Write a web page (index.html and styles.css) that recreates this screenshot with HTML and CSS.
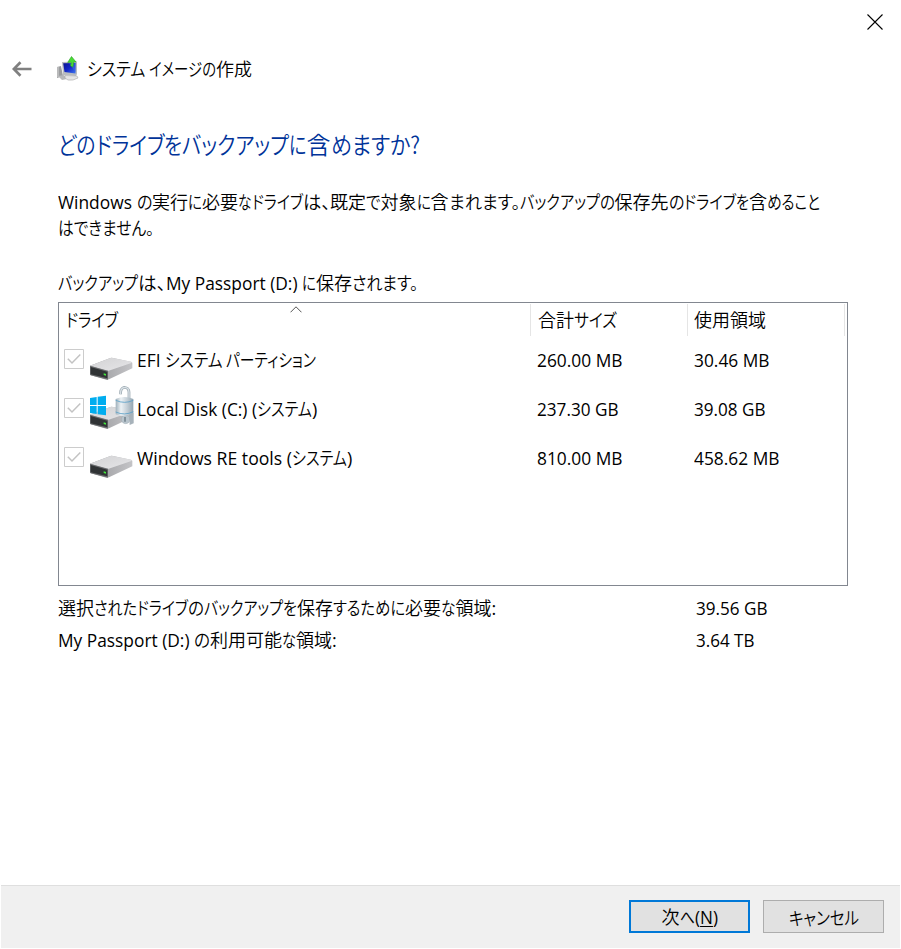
FILE: index.html
```
<!DOCTYPE html>
<html lang="ja">
<head>
<meta charset="utf-8">
<title>システム イメージの作成</title>
<link rel="stylesheet" href="styles.css">
</head>
<body>
<svg class="defs" aria-hidden="true">
  <defs>
    <linearGradient id="top" x1="0" y1="0" x2="1" y2="1"><stop offset="0" stop-color="#d2d2d4"/><stop offset="1" stop-color="#e6e6e8"/></linearGradient>
    <linearGradient id="side" x1="0" y1="0" x2="1" y2="0"><stop offset="0" stop-color="#96979a"/><stop offset="1" stop-color="#c4c4c7"/></linearGradient>
    <linearGradient id="steel" x1="0" y1="0" x2="1" y2="0"><stop offset="0" stop-color="#9fb0bb"/><stop offset=".3" stop-color="#edf2f5"/><stop offset=".65" stop-color="#c3ced6"/><stop offset="1" stop-color="#93a5b1"/></linearGradient>
    <linearGradient id="screen" x1="0" y1="0" x2="1" y2="1"><stop offset="0" stop-color="#0a1290"/><stop offset=".5" stop-color="#1428c8"/><stop offset="1" stop-color="#3f78f0"/></linearGradient>
    <symbol id="drive" viewBox="96 -12 144 147">
      <path d="M102 77 163 54q4-1 8 0l54 11q4 1 4 5v15l-70 33q-4 2-8 1l-46-13q-3-1-3-5z" fill="url(#side)"/>
      <path d="M102 77 163 54q4-1 8 0l54 11q4 2 1 4l-68 23q-3 1-6 0z" fill="url(#top)"/>
      <path d="M102 77l54 15v27l-52-13q-2-1-2-4z" fill="#6c6e70"/>
      <path d="M104 81l50 14v20l-50-12z" fill="#303335"/>
      <path d="M143 100l7 2v5l-7-2z" fill="#42e83c"/>
    </symbol>
    <symbol id="check" viewBox="0 0 20 20">
      <path d="M.5.5h19v19H.5z" fill="#fff" stroke="#ccc"/>
      <path d="M3.8 9.8 8 14 16.3 5.5" fill="none" stroke="#c3c3c3" stroke-width="1.5"/>
    </symbol>
  </defs>
</svg>
<div class="window">
  <div class="titlebar">
    <svg class="close" viewBox="0 0 16 16"><path d="M.5.5l15 15M15.5.5l-15 15" stroke="#000" stroke-width="1.1"/></svg>
  </div>
  <header class="head">
    <svg class="back" viewBox="0 0 20 16"><path d="M19.5 8H2M8.5 1.2 1.8 8l6.700 6.800" fill="none" stroke="#808080" stroke-width="2.700"/></svg>
    <svg class="app" viewBox="0 0 24 26">
      <path d="M1 11l4-1 2 10-6 2z" fill="#9b9c9e"/><path d="M2 11v10" stroke="#d8d8d8"/>
      <path d="M2 20l6-1 3 4-5 1z" fill="#b7b8ba"/>
      <path d="M6 6 21 5.500V18l-1 2-13-1z" fill="#b9bcc0"/>
      <path d="M7.200 7.200 19.500 7v10.500l-11-1.500z" fill="url(#screen)"/>
      <path d="M13 7.200l6.500-.2v9z" fill="#3f6ae6" opacity=".6"/>
      <path d="M9 19.500l12 .5 1 2q-5 3-10 2l-3-2z" fill="#e5e5e5" stroke="#a9a9a9" stroke-width=".6"/>
      <path d="M15.500.5 20 6l-2.500.1q.4 3-1 5.200l-2-1.700q.9-1.600.6-3.400l-3.400.2z" fill="#49dc35" stroke="#259f20" stroke-width=".6"/>
    </svg>
    <div class="line"><span class="fit" data-w="62">システム </span><span class="fit" data-w="67">イメージの</span>作成</div>
  </header>
  <main>
    <h1><span class="fit" data-w="37.500">どの</span><span class="fit" data-w="68.500">ドライブ</span><span class="fit" data-w="18">を</span><span class="fit" data-w="107">バックアップ</span><span class="fit" data-w="17.500">に</span>含<span class="fit" data-w="89">めますか?</span></h1>
    <div class="line intro"><span class="fit l" data-w="78.500">Windows </span><span class="fit" data-w="15.500">の</span>実行<span class="fit" data-w="14">に</span>必要<span class="fit" data-w="13.500">な</span><span class="fit" data-w="51">ドライブ</span><span class="fit" data-w="27.500">は、</span>既定<span class="fit" data-w="14.500">で</span>対象<span class="fit" data-w="14">に</span>含<span class="fit" data-w="71">まれます。</span><span class="fit" data-w="80">バックアップ</span><span class="fit" data-w="15">の</span>保存先<span class="fit" data-w="15.500">の</span><span class="fit" data-w="52">ドライブ</span><span class="fit" data-w="13">を</span>含<span class="fit" data-w="53">めること</span></div>
    <div class="line intro"><span class="fit" data-w="96">はできません。</span></div>
    <div class="line dest"><span class="fit" data-w="80">バックアップ</span><span class="fit" data-w="28">は、</span><span class="fit l" data-w="136">My Passport (D:) </span><span class="fit" data-w="14">に</span>保存<span class="fit" data-w="66">されます。</span></div>
    <section class="list">
      <svg class="sort" viewBox="0 0 12 7"><path d="M.5 6.300 6 .8l5.500 5.500" fill="none" stroke="#555"/></svg>
      <div class="row cols">
        <div class="name"><span class="fit" data-w="52">ドライブ</span></div>
        <div class="total">合計<span class="fit" data-w="43">サイズ</span></div>
        <div class="used">使用領域</div>
      </div>
      <div class="row item">
        <div class="name"><svg class="check"><use href="#check"/></svg><svg class="disk"><use href="#drive"/></svg><div><span class="fit l" data-w="28">EFI </span><span class="fit" data-w="61">システム </span><span class="fit" data-w="90">パーティション</span></div></div>
        <div class="total"><span class="fit l" data-w="85.500">260.00 MB</span></div>
        <div class="used"><span class="fit l" data-w="75.500">30.46 MB</span></div>
      </div>
      <div class="row item">
        <div class="name"><svg class="check"><use href="#check"/></svg><svg class="disk" viewBox="96 135 144 147">
          <use href="#drive" x="96" y="135" width="144" height="147"/>
          <path d="M102 174l20-3v24h-20zM125 170.500l25-3.500v28h-25zM102 198h20v24l-20-3zM125 198h25v28l-25-3.500z" fill="#00adef"/>
          <path d="M194 163v-6c0-20 25-19 25 0v20" fill="none" stroke="#8c9ba5" stroke-width="8"/>
          <path d="M194 162v-5c0-20 25-19 25 0v20" fill="none" stroke="#d8e0e5" stroke-width="4.500"/>
          <circle cx="209" cy="238" r="13" fill="#b9c5cd" stroke="#93a1aa"/>
          <path d="M207 231v14" stroke="#677883" stroke-width="4"/>
          <path d="M219 222l14-4v32l-12 5z" fill="#a7b2ba"/>
          <path d="M179 177q27-12 53 0v42q-26 15-53 4z" fill="url(#steel)"/>
          <path d="M179 181q27 12 53 0M179 216q27 12 53-1" fill="none" stroke="#5aa0c8" stroke-width="2.500"/>
        </svg><div><span class="fit l" data-w="120">Local Disk (C:) (</span><span class="fit" data-w="55">システム</span><span class="l">)</span></div></div>
        <div class="total"><span class="fit l" data-w="81.500">237.30 GB</span></div>
        <div class="used"><span class="fit l" data-w="71.500">39.08 GB</span></div>
      </div>
      <div class="row item">
        <div class="name"><svg class="check"><use href="#check"/></svg><svg class="disk"><use href="#drive"/></svg><div><span class="fit l" data-w="155">Windows RE tools (</span><span class="fit" data-w="55">システム</span><span class="l">)</span></div></div>
        <div class="total"><span class="fit l" data-w="85.500">810.00 MB</span></div>
        <div class="used"><span class="fit l" data-w="85.500">458.62 MB</span></div>
      </div>
    </section>
    <div class="line sum"><div class="label">選択<span class="fit" data-w="43">された</span><span class="fit" data-w="51">ドライブ</span><span class="fit" data-w="16">の</span><span class="fit" data-w="79">バックアップ</span><span class="fit" data-w="14">を</span>保存<span class="fit" data-w="72">するために</span>必要<span class="fit" data-w="14.500">な</span>領域<span class="l">:</span></div><span class="fit l" data-w="71.500">39.56 GB</span></div>
    <div class="line sum"><div class="label"><span class="fit l" data-w="136">My Passport (D:) </span><span class="fit" data-w="16">の</span>利用可能<span class="fit" data-w="14">な</span>領域<span class="l">:</span></div><span class="fit l" data-w="58.500">3.64 TB</span></div>
  </main>
  <footer>
    <button class="btn primary">次<span class="fit" data-w="15">へ</span><span class="fit l" data-w="23">(<u>N</u>)</span></button>
    <button class="btn"><span class="fit" data-w="70">キャンセル</span></button>
  </footer>
</div>
<script src="fit.js"></script>
</body>
</html>
```
FILE: styles.css
```
* { box-sizing: border-box; }
body {
  margin: 0;
  background: #fff;
  color: #000;
  font: 350 18px/26px "Noto Sans CJK JP", sans-serif;
}
.defs { position: absolute; width: 0; height: 0; }
.window { height: 949px; display: flex; flex-direction: column; padding: 0 1px 1px; }
.titlebar { height: 50px; display: flex; justify-content: flex-end; padding: 14px 17px 0 0; }
.close { width: 16px; height: 16px; }
.head { height: 38px; display: flex; align-items: center; padding-left: 11px; }
.head .line { padding-bottom: 2px; }
.back { width: 20px; height: 16px; margin-right: 24px; }
.app { width: 24px; height: 26px; margin-right: 7px; }
.line { white-space: nowrap; }
.fit { display: inline-block; white-space: pre; transform-origin: 0 50%; font-feature-settings: "palt"; }
.l { font-family: "Open Sans", sans-serif; font-weight: 400; }
main { flex: 1; padding: 38px 52px 0 57px; }
h1 { margin: 0 0 26px; height: 36px; font-size: 24px; line-height: 36px; font-weight: 350; color: #003399; white-space: nowrap; }
.intro { height: 26px; }
.dest { margin-top: 29px; height: 30px; }
.list { position: relative; width: 790px; height: 284px; margin-top: 3px; border: 1px solid #828790; }
.sort { position: absolute; left: 231px; top: 3px; width: 12px; height: 7px; }
.row { display: grid; grid-template-columns: 472px 157px 157px; white-space: nowrap; }
.cols { height: 33px; line-height: 31px; }
.cols > div { border-right: 1px solid #e5e5e5; margin-top: 1px; }
.cols .name { padding-left: 7px; }
.cols .total { padding-left: 7px; }
.cols .used { padding-left: 6px; }
.item { height: 49px; line-height: 47px; }
.item .name { display: flex; padding-left: 5px; }
.item .total { padding-left: 6px; }
.item .used { padding-left: 6px; }
.check { width: 20px; height: 20px; margin: 13px 4px 0 0; }
.disk { width: 48px; height: 49px; margin-right: 1px; }
.sum { display: flex; align-items: baseline; height: 32px; line-height: 32px; }
.sum .label { width: 638px; }
.list + .sum { margin-top: 5px; }
footer { height: 63px; background: #f0f0f0; border-top: 1px solid #dfdfdf; display: flex; justify-content: flex-end; gap: 13px; padding: 14px 16px 0 0; }
.btn { width: 121px; height: 33px; padding: 0; border: 1px solid #adadad; background: #e1e1e1; color: #000; font: inherit; line-height: 30px; }
.primary { border: 2px solid #0078d7; line-height: 28px; }
u { text-underline-offset: 2px; text-decoration-thickness: 1px; }
```
FILE: fit.js
```
// Condense each run of text to its column width.
document.querySelectorAll(".fit").forEach(function (el) {
  var natural = el.getBoundingClientRect().width;
  var wanted = parseFloat(el.dataset.w);
  el.style.transform = "scaleX(" + wanted / natural + ")";
  el.style.marginRight = wanted - natural + "px";
});
```
